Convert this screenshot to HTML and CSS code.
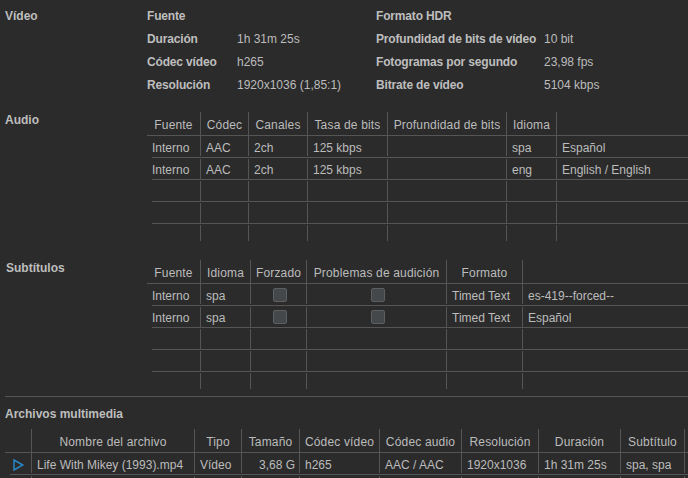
FILE: index.html
```html
<!DOCTYPE html>
<html lang="es">
<head>
<meta charset="utf-8">
<title>Información</title>
<link rel="stylesheet" href="styles.css">
</head>
<body>
<section class="section video">
  <h2 class="label">Vídeo</h2>
  <div class="info">
    <div class="info-row"><b>Fuente</b><span></span><b>Formato HDR</b><span></span></div>
    <div class="info-row"><b>Duración</b><span>1h 31m 25s</span><b>Profundidad de bits de vídeo</b><span>10 bit</span></div>
    <div class="info-row"><b>Códec vídeo</b><span>h265</span><b>Fotogramas por segundo</b><span>23,98 fps</span></div>
    <div class="info-row"><b>Resolución</b><span>1920x1036 (1,85:1)</span><b>Bitrate de vídeo</b><span>5104 kbps</span></div>
  </div>
</section>

<section class="section audio">
  <h2 class="label">Audio</h2>
  <div class="table">
    <div class="row head"><div>Fuente</div><div>Códec</div><div>Canales</div><div>Tasa de bits</div><div>Profundidad de bits</div><div>Idioma</div><div></div></div>
    <div class="row first"><div>Interno</div><div>AAC</div><div>2ch</div><div>125 kbps</div><div></div><div>spa</div><div>Español</div></div>
    <div class="row"><div>Interno</div><div>AAC</div><div>2ch</div><div>125 kbps</div><div></div><div>eng</div><div>English / English</div></div>
    <div class="row"><div></div><div></div><div></div><div></div><div></div><div></div><div></div></div>
    <div class="row"><div></div><div></div><div></div><div></div><div></div><div></div><div></div></div>
    <div class="row tail"><div></div><div></div><div></div><div></div><div></div><div></div><div></div></div>
  </div>
</section>

<section class="section subs">
  <h2 class="label">Subtítulos</h2>
  <div class="table">
    <div class="row head"><div>Fuente</div><div>Idioma</div><div>Forzado</div><div>Problemas de audición</div><div>Formato</div><div></div></div>
    <div class="row first"><div>Interno</div><div>spa</div><div class="check"><input type="checkbox"></div><div class="check"><input type="checkbox"></div><div>Timed Text</div><div>es-419--forced--</div></div>
    <div class="row"><div>Interno</div><div>spa</div><div class="check"><input type="checkbox"></div><div class="check"><input type="checkbox"></div><div>Timed Text</div><div>Español</div></div>
    <div class="row"><div></div><div></div><div></div><div></div><div></div><div></div></div>
    <div class="row"><div></div><div></div><div></div><div></div><div></div><div></div></div>
    <div class="row tail"><div></div><div></div><div></div><div></div><div></div><div></div></div>
  </div>
</section>

<hr class="rule">

<section class="media">
  <h2 class="label">Archivos multimedia</h2>
  <div class="table">
    <div class="row head"><div></div><div>Nombre del archivo</div><div>Tipo</div><div>Tamaño</div><div>Códec vídeo</div><div>Códec audio</div><div>Resolución</div><div>Duración</div><div>Subtítulo</div><div></div></div>
    <div class="row first"><div class="play"><svg width="12" height="12" viewBox="0 0 12 12"><path d="M1 1 L9.8 6 L1 11 Z" fill="none" stroke="#2a86c4" stroke-width="1.5"/></svg></div><div>Life With Mikey (1993).mp4</div><div>Vídeo</div><div class="num">3,68 G</div><div>h265</div><div>AAC / AAC</div><div>1920x1036</div><div>1h 31m 25s</div><div>spa, spa</div><div></div></div>
    <div class="row tail"><div></div><div></div><div></div><div></div><div></div><div></div><div></div><div></div><div></div><div></div></div>
  </div>
</section>
</body>
</html>
```
FILE: styles.css
```css
* { box-sizing: border-box; }
html, body { height: 100%; }
body {
  margin: 0;
  height: 478px;
  overflow: hidden;
  background: #2b2b2b;
  color: #bcbcbc;
  font: 12px/16px "Liberation Sans", Arial, sans-serif;
}
.label {
  margin: 0;
  font-size: 12px;
  font-weight: bold;
  line-height: 16px;
  color: #bebebe;
}
.section { display: flex; }
.section > .label { flex: 0 0 142px; margin-left: 5px; }
.section > .table { flex: 1; min-width: 0; }

.video { padding-top: 4px; height: 112px; }
.video > .label { padding-top: 4px; }
.info { flex: 1; }
.info-row {
  display: grid;
  grid-template-columns: 90px 139px 168px 1fr;
  height: 23px;
  align-items: center;
}
.info-row b { color: #bebebe; white-space: nowrap; letter-spacing: -0.16px; }

.audio { height: 148px; }
.subs { height: 136px; }
.subs > .label { padding-left: 1px; }

.row {
  display: grid;
  height: 22px;
  margin-left: 5px;
  padding-top: 1px;
  border-bottom: 1px solid #555;
  white-space: nowrap;
}
.row > div {
  display: flex;
  align-items: center;
  min-width: 0;
  padding: 2px 0 0 5px;
  border-right: 1px solid #555;
}
.row > div:first-child { padding-left: 0; }
.row > div:last-child { border-right: 0; }
.row.head {
  height: 24px;
  margin-left: 0;
  padding-top: 0;
}
.row.head > div { justify-content: center; padding: 2px 0 0; letter-spacing: 0.17px; }
.row.first { padding-top: 0; padding-bottom: 1px; }
.row.first > div { padding-top: 3px; }
.row.tail { height: 17px; border-bottom: 0; }

.audio .row { grid-template-columns: 49px 48px 59px 80px 119px 50px 1fr; }
.audio .row.head { grid-template-columns: 54px 48px 59px 80px 119px 50px 1fr; }
.subs .row { grid-template-columns: 49px 50px 56px 140px 76px 1fr; }
.subs .row.head { grid-template-columns: 54px 50px 56px 140px 76px 1fr; }

.row > .check { justify-content: center; padding: 0 0 0 2px; }
.row.first > .check { padding: 2px 0 0 2px; }
.check input {
  appearance: none;
  width: 14px;
  height: 14px;
  margin: 0;
  background: #45484a;
  border: 1px solid #5c5f61;
  border-radius: 2px;
}

.rule {
  height: 1px;
  margin: 0 0 0 5px;
  border: 0;
  background: #555;
}

.media { padding: 9px 0 0 5px; }
.media .table { margin-top: 7px; }
.media .row { margin-left: 5px; grid-template-columns: 22px 163px 47px 58px 80px 82px 77px 82px 64px 1fr; }
.media .row.head { margin-left: 0; grid-template-columns: 27px 163px 47px 58px 80px 82px 77px 82px 64px 1fr; }
.row.first > div.play { padding: 3px 0 0 3px; }
.play svg { display: block; }
.row.first > .num { justify-content: flex-end; padding-right: 4px; }
```
